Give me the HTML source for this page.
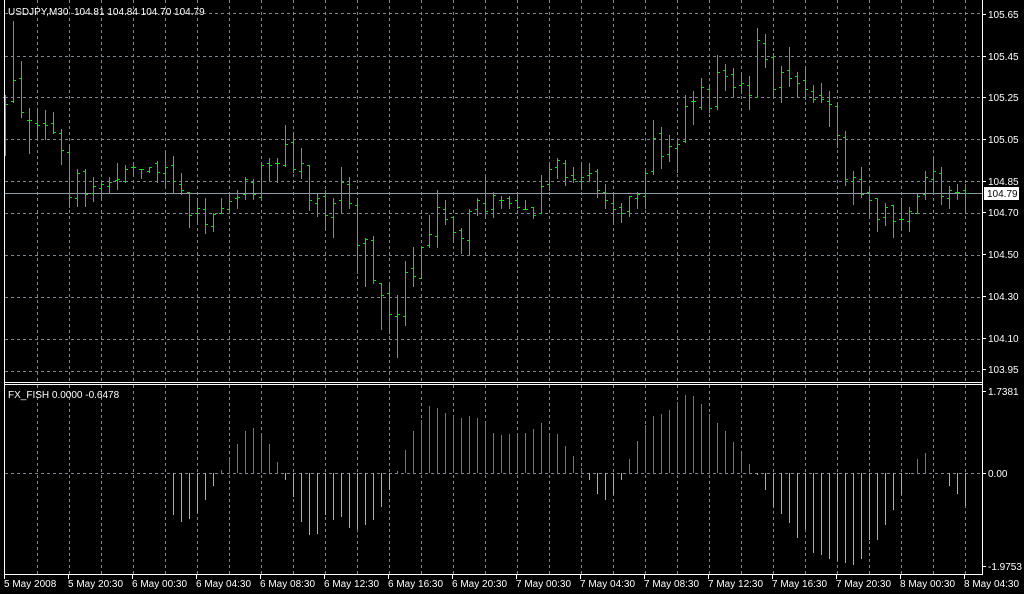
<!DOCTYPE html>
<html><head><meta charset="utf-8"><style>
html,body{margin:0;padding:0;background:#000;}
body{width:1024px;height:594px;overflow:hidden;}
svg{display:block;}
text{font-family:"Liberation Sans",sans-serif;font-size:10px;fill:#fff;}
</style></head><body>
<svg id="s" width="1024" height="594" xmlns="http://www.w3.org/2000/svg" shape-rendering="crispEdges">
<rect width="1024" height="594" fill="#000"/>
<g id="grid" stroke="#778899" stroke-width="1" stroke-dasharray="3,3"></g>
<line x1="5" y1="193.5" x2="982" y2="193.5" stroke="#8d9aa8"/>
<g id="bars" stroke="#00e800" stroke-width="1"></g>
<g id="hist" stroke-width="1"></g>
<g stroke="#fff" stroke-width="1">
<line x1="4.5" y1="0" x2="4.5" y2="575"/>
<line x1="982.5" y1="0" x2="982.5" y2="575"/>
<line x1="4" y1="382.5" x2="983" y2="382.5"/>
<line x1="4" y1="384.5" x2="983" y2="384.5"/>
<line x1="4" y1="574.5" x2="983" y2="574.5"/>
</g>
<g id="ticks" stroke="#fff"></g>
<text x="8" y="15" style="white-space:pre" xml:space="preserve">USDJPY,M30  104.81 104.84 104.70 104.79</text>
<text x="8" y="398">FX_FISH 0.0000 -0.6478</text>
<g id="lbl"></g>
<rect x="984" y="187" width="35" height="13" fill="#fff"/>
<text x="987" y="197" style="fill:#000">104.79</text>
</svg>
<script>
var ns="http://www.w3.org/2000/svg";
function el(p,t,a,txt){var e=document.createElementNS(ns,t);for(var k in a)e.setAttribute(k,a[k]);if(txt)e.textContent=txt;document.getElementById(p).appendChild(e);return e;}
var hy=[13,56,97,139,181,213,255,297,339,371];
hy.forEach(function(y){el("grid","line",{x1:5,y1:y+.5,x2:982,y2:y+.5});});
el("grid","line",{x1:5,y1:473.5,x2:982,y2:473.5});
for(var x=37;x<982;x+=32){el("grid","line",{x1:x+.5,y1:0,x2:x+.5,y2:382});el("grid","line",{x1:x+.5,y1:385,x2:x+.5,y2:574});}
var pl=[["105.65",14],["105.45",56],["105.25",97],["105.05",139],["104.85",181],["104.70",212],["104.50",254],["104.30",296],["104.10",338],["103.95",369],["1.7381",391],["0.00",473],["-1.9753",566]];
pl.forEach(function(p){el("ticks","line",{x1:983,y1:p[1]+.5,x2:986,y2:p[1]+.5});el("lbl","text",{x:988,y:p[1]+4},p[0]);});
var dl=["5 May 2008","5 May 20:30","6 May 00:30","6 May 04:30","6 May 08:30","6 May 12:30","6 May 16:30","6 May 20:30","7 May 00:30","7 May 04:30","7 May 08:30","7 May 12:30","7 May 16:30","7 May 20:30","8 May 00:30","8 May 04:30"];
dl.forEach(function(d,i){var x=4+64*i;el("ticks","line",{x1:x+.5,y1:575,x2:x+.5,y2:579});el("lbl","text",{x:x,y:587},d);});
var B=[[255,435,260,283],[33,275,273,211],[153,320,205,307],[295,428,330,330],[295,385,340,345],[300,388,340,346],[307,370,340,366],[357,462,370,421],[403,592,427,560],[478,587,565,490],[478,587,484,551],[502,572,548,528],[520,560,535,522],[502,548,528,515],[460,537,509,508],[465,515,513,478],[460,492,472,472],[478,503,478,478],[472,485,484,472],[452,515,460,485],[424,525,490,470],[437,548,465,513],[489,552,522,541],[547,650,547,616],[565,635,610,593],[565,668,598,643],[610,662,648,613],[565,610,610,593],[548,600,598,572],[540,593,565,560],[500,566,552,507],
[508,566,515,552],[460,568,560,465],[444,510,460,466],[444,515,460,460],[345,467,466,403],[370,485,395,478],[413,503,484,460],[465,600,466,571],[552,617,580,565],[540,650,558,616],[564,680,622,580],[471,605,571,515],[501,593,522,580],[568,790,586,706],[684,827,700,686],[678,820,691,810],[820,958,820,856],[820,970,850,913],[856,1040,918,913],[753,946,918,787],[711,827,775,799],[711,805,805,712],[615,712,706,673],[540,712,679,592],[570,643,598,628],[622,695,622,667],[655,730,661,685],[598,735,691,604],[565,616,598,571],[500,625,580,604],[546,622,598,555],
[558,593,571,571],[558,593,565,580],[549,593,571,592],[570,598,598,598],[591,623,592,616],[495,610,610,529],[459,539,523,478],[444,503,472,451],[450,525,460,502],[471,515,496,508],[460,537,514,502],[460,510,496,490],[477,561,484,541],[522,593,547,571],[546,635,580,598],[579,635,592,610],[558,617,604,559],[546,593,565,552],[477,593,559,490],[329,491,484,383],[350,473,370,438],[375,453,433,408],[388,485,414,403],[255,395,394,289],[243,341,274,274],[204,297,290,232],[225,307,238,295],[136,297,289,187],[162,240,181,199],[175,258,193,232],
[186,250,226,220],[198,296,226,256],[54,262,262,91],[72,170,100,148],[130,256,142,238],[168,275,232,187],[111,227,181,205],[186,262,199,220],[168,268,211,238],[225,275,244,268],[219,275,256,268],[243,347,274,283],[280,410,289,376],[363,525,382,508],[483,581,514,502],[471,560,508,553],[535,617,547,571],[565,662,565,628],[579,644,622,592],[586,680,586,634],[568,650,628,628],[591,662,634,604],[553,610,610,559],[483,566,553,502],[443,553,508,484],[471,581,490,559],[528,593,565,541],[522,566,547,547],[521,610,541,550]];
function Y(z){return Math.round(10+z/3)+.5;}
B.forEach(function(b,k){var x=5+8*k+.5;
el("bars","line",{x1:x,y1:Y(b[0])-.5,x2:x,y2:Y(b[1])+.5});
el("bars","line",{x1:x-2.5,y1:Y(b[2]),x2:x,y2:Y(b[2])});
el("bars","line",{x1:x,y1:Y(b[3]),x2:x+2.5,y2:Y(b[3])});});
var H=[-42,-49,-46,-40,-27,-13,3,15,29,42,45,40,29,11,-7,-24,-49,-62,-61,-42,-47,-44,-55,-56,-52,-47,-34,-17,2,23,42,53,67,65,60,57,55,57,55,50,40,38,39,40,40,44,50,39,39,27,17,5,-7,-21,-27,-22,-7,14,32,48,57,59,63,71,78,77,69,59,50,42,31,19,9,-2,-17,-34,-41,-50,-65,-56,-80,-82,-86,-88,-90,-92,-86,-67,-67,-52,-37,-22,-1,14,20,0,0,-13,-21,-33];
H.forEach(function(h,i){if(!h)return;var x=173+8*i+.5;
el("hist","line",{x1:x,y1:473,x2:x,y2:473-h,stroke:h>0?"#4682b4":"#ffa500"});});
</script>
</body></html>
